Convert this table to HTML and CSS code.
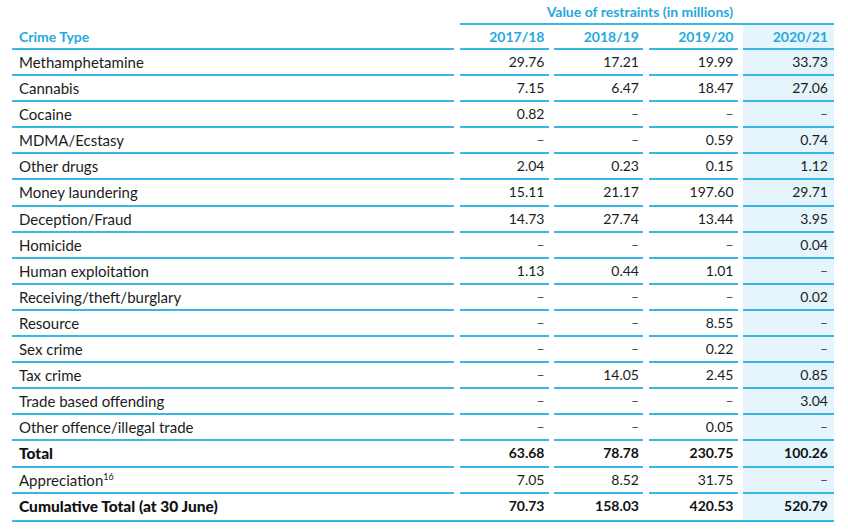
FILE: index.html
```html
<!DOCTYPE html>
<html lang="en">
<head>
<meta charset="utf-8">
<title>Value of restraints</title>
<link rel="stylesheet" href="styles.css">
</head>
<body>
<div class="tbl">
  <div class="row title-row">
    <div class="cell"></div>
    <div class="cell title">Value of restraints (in millions)</div>
  </div>
  <div class="row head">
    <div class="cell label">Crime Type</div>
    <div class="cell num">2017/18</div>
    <div class="cell num">2018/19</div>
    <div class="cell num">2019/20</div>
    <div class="cell num shade">2020/21</div>
  </div>
  <div class="row"><div class="cell label">Methamphetamine</div><div class="cell num">29.76</div><div class="cell num">17.21</div><div class="cell num">19.99</div><div class="cell num shade">33.73</div></div>
  <div class="row"><div class="cell label">Cannabis</div><div class="cell num">7.15</div><div class="cell num">6.47</div><div class="cell num">18.47</div><div class="cell num shade">27.06</div></div>
  <div class="row"><div class="cell label">Cocaine</div><div class="cell num">0.82</div><div class="cell num dash">–</div><div class="cell num dash">–</div><div class="cell num shade dash">–</div></div>
  <div class="row"><div class="cell label">MDMA/Ecstasy</div><div class="cell num dash">–</div><div class="cell num dash">–</div><div class="cell num">0.59</div><div class="cell num shade">0.74</div></div>
  <div class="row"><div class="cell label">Other drugs</div><div class="cell num">2.04</div><div class="cell num">0.23</div><div class="cell num">0.15</div><div class="cell num shade">1.12</div></div>
  <div class="row"><div class="cell label">Money laundering</div><div class="cell num">15.11</div><div class="cell num">21.17</div><div class="cell num">197.60</div><div class="cell num shade">29.71</div></div>
  <div class="row"><div class="cell label">Deception/Fraud</div><div class="cell num">14.73</div><div class="cell num">27.74</div><div class="cell num">13.44</div><div class="cell num shade">3.95</div></div>
  <div class="row"><div class="cell label">Homicide</div><div class="cell num dash">–</div><div class="cell num dash">–</div><div class="cell num dash">–</div><div class="cell num shade">0.04</div></div>
  <div class="row"><div class="cell label">Human exploitation</div><div class="cell num">1.13</div><div class="cell num">0.44</div><div class="cell num">1.01</div><div class="cell num shade dash">–</div></div>
  <div class="row"><div class="cell label">Receiving/theft/burglary</div><div class="cell num dash">–</div><div class="cell num dash">–</div><div class="cell num dash">–</div><div class="cell num shade">0.02</div></div>
  <div class="row"><div class="cell label">Resource</div><div class="cell num dash">–</div><div class="cell num dash">–</div><div class="cell num">8.55</div><div class="cell num shade dash">–</div></div>
  <div class="row"><div class="cell label">Sex crime</div><div class="cell num dash">–</div><div class="cell num dash">–</div><div class="cell num">0.22</div><div class="cell num shade dash">–</div></div>
  <div class="row"><div class="cell label">Tax crime</div><div class="cell num dash">–</div><div class="cell num">14.05</div><div class="cell num">2.45</div><div class="cell num shade">0.85</div></div>
  <div class="row"><div class="cell label">Trade based offending</div><div class="cell num dash">–</div><div class="cell num dash">–</div><div class="cell num dash">–</div><div class="cell num shade">3.04</div></div>
  <div class="row"><div class="cell label">Other offence/illegal trade</div><div class="cell num dash">–</div><div class="cell num dash">–</div><div class="cell num">0.05</div><div class="cell num shade dash">–</div></div>
  <div class="row bold"><div class="cell label">Total</div><div class="cell num">63.68</div><div class="cell num">78.78</div><div class="cell num">230.75</div><div class="cell num shade">100.26</div></div>
  <div class="row"><div class="cell label">Appreciation<sup class="note">16</sup></div><div class="cell num">7.05</div><div class="cell num">8.52</div><div class="cell num">31.75</div><div class="cell num shade dash">–</div></div>
  <div class="row bold last"><div class="cell label">Cumulative Total (at 30 June)</div><div class="cell num">70.73</div><div class="cell num">158.03</div><div class="cell num">420.53</div><div class="cell num shade">520.79</div></div>
</div>
</body>
</html>
```
FILE: styles.css
```css
html, body {
  margin: 0;
  padding: 0;
  background: #ffffff;
}

body {
  font-family: "Lato", "Liberation Sans", sans-serif;
  font-size: 14px;
  color: #1c1c1c;
}

.tbl {
  width: 822px;
  margin-left: 12px;
}

.row {
  display: grid;
  grid-template-columns: 442px 89px 89px 89px 91px;
  column-gap: 5.5px;
  height: 26.1px;
}

.cell {
  box-sizing: border-box;
  line-height: 24px;
  border-bottom: 2px solid #38b6e4;
  white-space: nowrap;
}

.label {
  padding-left: 7px;
  font-size: 15px;
}

.num {
  text-align: right;
  padding-right: 4px;
}

.num.shade {
  padding-right: 6px;
}

.shade {
  background: #e6f5fc;
}

.dash {
  color: #444444;
}

.title-row {
  height: 25px;
}

.title-row .cell:first-child {
  border-bottom: none;
}

.title {
  grid-column: 2 / 6;
  line-height: 23px;
  text-align: right;
  padding-right: 101px;
  font-weight: 700;
  color: #27a8de;
}

.head {
  height: 25px;
}

.head .cell {
  line-height: 23px;
  font-size: 14px;
  font-weight: 700;
  color: #27a8de;
}

.bold .cell {
  font-weight: 700;
  color: #111111;
}

.bold .label {
  font-weight: 900;
  font-size: 15.5px;
}

.last {
  border-bottom: 2px solid #38b6e4;
  height: 26px;
}

.last .cell {
  border-bottom: none;
}

.note {
  font-size: 9px;
  line-height: 0;
  vertical-align: 6px;
}
```
